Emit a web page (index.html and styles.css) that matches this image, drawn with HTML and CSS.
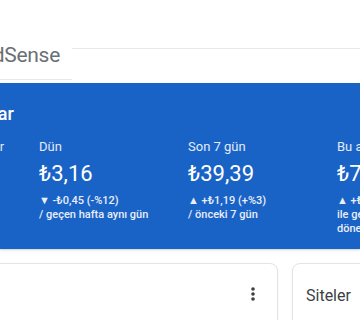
FILE: index.html
```html
<!DOCTYPE html>
<html lang="tr">

<head>
    <meta charset="UTF-8">
    <meta name="viewport" content="width=device-width, initial-scale=1.0">
    <title>Google AdSense - Ana sayfa</title>
    <link rel="stylesheet" href="styles.css">
</head>

<body>
    <header class="topbar">
        <div class="brand">
            <span class="brand-name">Google AdSense</span>
        </div>
        <div class="topbar-rest"></div>
    </header>

    <main class="content">
        <section class="earnings">
            <div class="earnings-inner">
                <h2>Tahmini kazançlar</h2>
                <div class="stats">
                    <div class="stat">
                        <div class="stat-label">Bugün şu ana kadar</div>
                        <div class="stat-value">₺0,71</div>
                        <div class="stat-change">▼ -₺0,12 (-%14)</div>
                        <div class="stat-note">/ dün bu saate kadar</div>
                    </div>
                    <div class="stat">
                        <div class="stat-label">Dün</div>
                        <div class="stat-value">₺3,16</div>
                        <div class="stat-change">▼ -₺0,45 (-%12)</div>
                        <div class="stat-note">/ geçen hafta aynı gün</div>
                    </div>
                    <div class="stat">
                        <div class="stat-label">Son 7 gün</div>
                        <div class="stat-value">₺39,39</div>
                        <div class="stat-change">▲ +₺1,19 (+%3)</div>
                        <div class="stat-note">/ önceki 7 gün</div>
                    </div>
                    <div class="stat">
                        <div class="stat-label">Bu ay</div>
                        <div class="stat-value">₺74,20</div>
                        <div class="stat-change">▲ +₺6,02 (+%9)</div>
                        <div class="stat-note">ile geçen yılın aynı<br>dönemi</div>
                    </div>
                </div>
            </div>
        </section>

        <div class="cards">
            <div class="card card-main">
                <div class="card-head">
                    <button class="more-btn" aria-label="Diğer seçenekler">
                        <svg width="4" height="14" viewBox="0 0 4 14">
                            <circle cx="2" cy="2" r="1.8" fill="#3c4043" />
                            <circle cx="2" cy="7" r="1.8" fill="#3c4043" />
                            <circle cx="2" cy="12" r="1.8" fill="#3c4043" />
                        </svg>
                    </button>
                </div>
            </div>
            <div class="card card-side">
                <h3>Siteler</h3>
            </div>
        </div>
    </main>
</body>

</html>
```

FILE: styles.css
```css
body {
    margin: 0;
    font-family: Roboto, "Noto Sans", Arial, sans-serif;
    background: #fff;
    overflow: hidden;
}

.topbar {
    display: flex;
    align-items: flex-start;
    height: 80px;
}

.brand {
    width: 72px;
    height: 79px;
    border-bottom: 1px solid #e8e8ea;
    display: flex;
    justify-content: flex-end;
}

.brand-name {
    white-space: nowrap;
    font-size: 21px;
    color: #6b6f74;
    margin-top: 43px;
    margin-right: 12px;
    letter-spacing: -0.3px;
}

.topbar-rest {
    flex: 1;
    height: 48px;
    border-bottom: 1px solid #e8e8ea;
}

.earnings {
    margin-top: 3px;
    background: #1a63c6;
    height: 166px;
    color: #fff;
    box-shadow: 0 1px 2px rgba(60, 64, 67, 0.25);
}

.earnings-inner {
    margin-left: -133px;
    padding-top: 19px;
}

.earnings h2 {
    margin: 0;
    font-size: 18px;
    font-weight: 500;
    line-height: 24px;
    white-space: nowrap;
}

.stats {
    display: flex;
    padding-left: 23px;
    margin-top: 11px;
}

.stat {
    width: 149px;
    flex: none;
    white-space: nowrap;
}

.stat-label {
    font-size: 13px;
    line-height: 20px;
    color: #e3ebf8;
}

.stat-value {
    font-size: 22px;
    line-height: 28px;
    margin-top: 3px;
}

.stat-change,
.stat-note {
    font-size: 11px;
    font-weight: 500;
    line-height: 14px;
    color: #e8eefa;
}

.stat-change {
    margin-top: 6px;
}

.cards {
    display: grid;
    grid-template-columns: 478px 200px;
    gap: 14px;
    margin-left: -200px;
    margin-top: 14px;
}

.card {
    background: #fff;
    border: 1px solid #e3e4e6;
    border-radius: 8px;
    height: 120px;
    box-shadow: 0 1px 2px rgba(60, 64, 67, 0.08);
}

.card-head {
    display: flex;
    justify-content: flex-end;
    padding: 18px 12px 0 0;
}

.more-btn {
    background: transparent;
    border: none;
    width: 24px;
    height: 24px;
    padding: 0;
    display: flex;
    align-items: center;
    justify-content: center;
}

.card-side h3 {
    margin: 0;
    padding: 20px 0 0 13px;
    font-size: 16px;
    font-weight: 400;
    line-height: 24px;
    color: #3c4043;
}
```
